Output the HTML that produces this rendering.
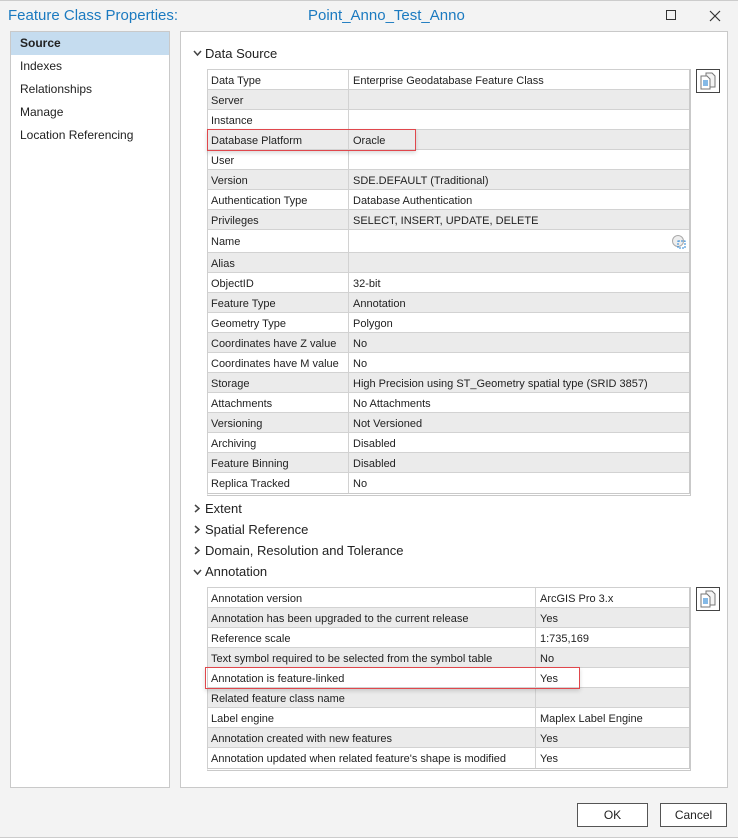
<!DOCTYPE html>
<html><head><style>
*{margin:0;padding:0;box-sizing:border-box}
body{width:738px;height:838px;background:#f3f3f3;font-family:"Segoe UI","Liberation Sans",sans-serif;position:relative;overflow:hidden;color:#222}
.abs{position:absolute}
.title{left:8px;top:7px;font-size:15px;color:#1b7ac0}
.title2{left:308px;top:7px;font-size:15px;color:#1b7ac0}
.nav{left:10px;top:31px;width:160px;height:757px;background:#fff;border:1px solid #c9c9c9}
.nav div{height:23px;line-height:23px;padding-left:9px;font-size:12px}
.nav .sel{background:#c5dcef;font-weight:bold}
.content{left:180px;top:31px;width:548px;height:757px;background:#fff;border:1px solid #c9c9c9}
.h{font-size:13px;left:205px;color:#222}
.tbl{position:absolute;left:207px;width:484px;border:1px solid #cfcfcf;border-right:2px solid #c9c9c9;border-bottom:3px double #c9c9c9}
.r{position:relative;height:20px;border-bottom:1px solid #d2d2d2;font-size:11px;line-height:22px}
.r.g{background:#ebebeb}
.r span{position:absolute;left:3px}
.r b{font-weight:normal;position:absolute;top:0;height:100%;border-left:1px solid #d2d2d2;padding-left:4px}
.copy{position:absolute;width:24px;height:24px;border:1px solid #444;background:#fff}
.red{position:absolute;border:1px solid #e0474c;box-shadow:0 2px 4px rgba(0,0,0,.15)}
.btn{position:absolute;top:803px;height:24px;border:1px solid #555;background:#fff;font-size:12px;text-align:center;line-height:22px}
</style></head><body>
<div class="abs" style="left:0;top:0;width:738px;height:1px;background:#ccc"></div>
<div class="abs" style="left:0;top:837px;width:738px;height:1px;background:#ccc"></div>
<div class="abs title">Feature Class Properties:</div>
<div class="abs title2">Point_Anno_Test_Anno</div>
<div class="abs" style="left:666px;top:10px;width:10px;height:10px;border:1px solid #333"></div>
<svg class="abs" style="left:709px;top:10px" width="12" height="12"><path d="M1 1L11 11M11 1L1 11" stroke="#333" stroke-width="1.2"/></svg>
<div class="abs nav">
<div class="sel">Source</div><div>Indexes</div><div>Relationships</div><div>Manage</div><div>Location Referencing</div>
</div>
<div class="abs content"></div>

<svg class="abs" style="left:193px;top:50px" width="9" height="7"><path d="M1 1L4.5 5L8 1" stroke="#444" stroke-width="1.5" fill="none"/></svg>
<div class="abs h" style="top:46px">Data Source</div>

<div class="tbl" style="top:69px">
<div class="r"><span>Data Type</span><b style="left:140px">Enterprise Geodatabase Feature Class</b></div>
<div class="r g"><span>Server</span><b style="left:140px"></b></div>
<div class="r"><span>Instance</span><b style="left:140px"></b></div>
<div class="r g"><span>Database Platform</span><b style="left:140px">Oracle</b></div>
<div class="r"><span>User</span><b style="left:140px"></b></div>
<div class="r g"><span>Version</span><b style="left:140px">SDE.DEFAULT (Traditional)</b></div>
<div class="r"><span>Authentication Type</span><b style="left:140px">Database Authentication</b></div>
<div class="r g"><span>Privileges</span><b style="left:140px">SELECT, INSERT, UPDATE, DELETE</b></div>
<div class="r" style="height:23px;line-height:25px"><span>Name</span><b style="left:140px"></b>
<svg style="position:absolute;right:3px;top:4px" width="15" height="15"><circle cx="7" cy="7" r="5.5" fill="#eee" stroke="#aaa"/><rect x="7" y="7" width="7" height="7" fill="none" stroke="#2a86d6" stroke-dasharray="2 1"/></svg></div>
<div class="r g"><span>Alias</span><b style="left:140px"></b></div>
<div class="r"><span>ObjectID</span><b style="left:140px">32-bit</b></div>
<div class="r g"><span>Feature Type</span><b style="left:140px">Annotation</b></div>
<div class="r"><span>Geometry Type</span><b style="left:140px">Polygon</b></div>
<div class="r g"><span>Coordinates have Z value</span><b style="left:140px">No</b></div>
<div class="r"><span>Coordinates have M value</span><b style="left:140px">No</b></div>
<div class="r g"><span>Storage</span><b style="left:140px">High Precision using ST_Geometry spatial type (SRID 3857)</b></div>
<div class="r"><span>Attachments</span><b style="left:140px">No Attachments</b></div>
<div class="r g"><span>Versioning</span><b style="left:140px">Not Versioned</b></div>
<div class="r"><span>Archiving</span><b style="left:140px">Disabled</b></div>
<div class="r g"><span>Feature Binning</span><b style="left:140px">Disabled</b></div>
<div class="r" style="border-bottom:none"><span>Replica Tracked</span><b style="left:140px">No</b></div>
</div>
<div class="red" style="left:207px;top:129px;width:209px;height:22px"></div>

<div class="copy" style="left:696px;top:69px"><svg width="22" height="22"><path d="M9 3h6l3 3v11h-9z" fill="#f4f4f4" stroke="#777"/><path d="M4 6h6l3 3v10h-9z" fill="#fff" stroke="#777"/><path d="M6 11h5M6 13h5M6 15h5" stroke="#3b8fd8" stroke-width="1.3"/></svg></div>

<svg class="abs" style="left:194px;top:504px" width="7" height="9"><path d="M1 1L5 4.5L1 8" stroke="#444" stroke-width="1.5" fill="none"/></svg>
<div class="abs h" style="top:501px">Extent</div>
<svg class="abs" style="left:194px;top:525px" width="7" height="9"><path d="M1 1L5 4.5L1 8" stroke="#444" stroke-width="1.5" fill="none"/></svg>
<div class="abs h" style="top:522px">Spatial Reference</div>
<svg class="abs" style="left:194px;top:546px" width="7" height="9"><path d="M1 1L5 4.5L1 8" stroke="#444" stroke-width="1.5" fill="none"/></svg>
<div class="abs h" style="top:543px">Domain, Resolution and Tolerance</div>
<svg class="abs" style="left:193px;top:569px" width="9" height="7"><path d="M1 1L4.5 5L8 1" stroke="#444" stroke-width="1.5" fill="none"/></svg>
<div class="abs h" style="top:564px">Annotation</div>

<div class="tbl" style="top:587px">
<div class="r"><span>Annotation version</span><b style="left:327px">ArcGIS Pro 3.x</b></div>
<div class="r g"><span>Annotation has been upgraded to the current release</span><b style="left:327px">Yes</b></div>
<div class="r"><span>Reference scale</span><b style="left:327px">1:735,169</b></div>
<div class="r g"><span>Text symbol required to be selected from the symbol table</span><b style="left:327px">No</b></div>
<div class="r"><span>Annotation is feature-linked</span><b style="left:327px">Yes</b></div>
<div class="r g"><span>Related feature class name</span><b style="left:327px"></b></div>
<div class="r"><span>Label engine</span><b style="left:327px">Maplex Label Engine</b></div>
<div class="r g"><span>Annotation created with new features</span><b style="left:327px">Yes</b></div>
<div class="r" style="border-bottom:none"><span>Annotation updated when related feature's shape is modified</span><b style="left:327px">Yes</b></div>
</div>
<div class="red" style="left:205px;top:667px;width:375px;height:22px"></div>

<div class="copy" style="left:696px;top:587px"><svg width="22" height="22"><path d="M9 3h6l3 3v11h-9z" fill="#f4f4f4" stroke="#777"/><path d="M4 6h6l3 3v10h-9z" fill="#fff" stroke="#777"/><path d="M6 11h5M6 13h5M6 15h5" stroke="#3b8fd8" stroke-width="1.3"/></svg></div>

<div class="btn" style="left:577px;width:71px">OK</div>
<div class="btn" style="left:660px;width:67px">Cancel</div>
</body></html>
